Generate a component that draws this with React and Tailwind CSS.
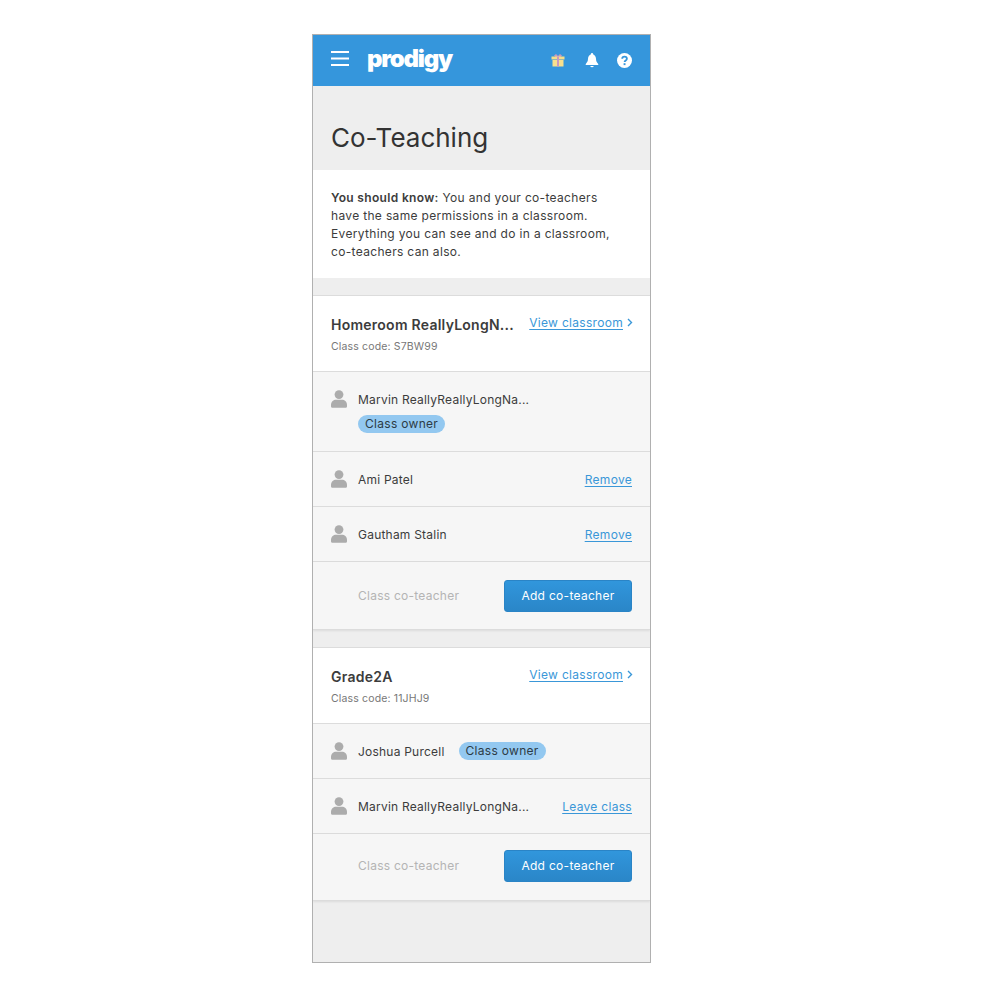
import React from "react";

function Person() {
  return (
    <svg width="16" height="18" viewBox="0 0 16 18" className="shrink-0 block">
      <circle cx="8" cy="4.6" r="4.4" fill="#acacac" />
      <path d="M0 15c0-3.4 2.600-5.200 5-5.200h6c2.400 0 5 1.800 5 5.200v1.200c0 .9-.8 1.600-1.600 1.600H1.600C.8 17.800 0 17.100 0 16.200z" fill="#acacac" />
    </svg>
  );
}

function Badge() {
  return (
    <span className="inline-flex h-[18px] items-center rounded-full bg-[#93c8f0] px-[7px] text-[12px] tracking-[0.3px] text-[#2d3b45]">
      Class owner
    </span>
  );
}

function Link({ children }) {
  return <a className="text-[12px] tracking-[0.3px] text-[#3a97d8] underline underline-offset-2 decoration-1">{children}</a>;
}

function CardHead({ title, code }) {
  return (
    <div className="flex h-[77px] items-start justify-between border-t border-b border-[#dcdcdc] bg-white pl-[18px] pr-[17px] pt-[19px]">
      <div>
        <div className="text-[14px] leading-[20px] font-semibold tracking-[0.25px] text-[#3c3c3c]">{title}</div>
        <div className="mt-[4px] text-[10.500px] leading-[16px] tracking-[0.15px] text-[#777777]">Class code: {code}</div>
      </div>
      <div className="-mt-[1px] flex items-center gap-[4px] leading-[18px]">
        <Link>View classroom</Link>
        <svg width="6" height="9" viewBox="0 0 6 9" fill="none" stroke="#3a97d8" strokeWidth="1.400" className="mb-[2px]">
          <path d="M1 1l3.500 3.500L1 8" />
        </svg>
      </div>
    </div>
  );
}

function Row({ name, action, badge }) {
  return (
    <div className="flex h-[55px] items-center border-b border-[#dcdcdc] bg-[#f6f6f6] px-[18px]">
      <Person />
      <span className="ml-[11px] mt-[1px] text-[12px] tracking-[0.22px] text-[#3c3c3c]">{name}</span>
      {badge && <span className="ml-[14px] flex"><Badge /></span>}
      {action && <span className="ml-auto mt-[1px] flex"><Link>{action}</Link></span>}
    </div>
  );
}

function AddRow({ second }) {
  return (
    <div className={second ? "flex h-[67px] items-start justify-between border-b border-[#dcdcdc] bg-[#f6f6f6] pl-[45px] pr-[18px] pt-[16px] shadow-[0_1px_2px_rgba(0,0,0,0.08)]" : "flex h-[68px] items-start justify-between border-b border-[#dcdcdc] bg-[#f6f6f6] pl-[45px] pr-[18px] pt-[18px] shadow-[0_1px_2px_rgba(0,0,0,0.08)]"}>
      <span className="mt-[7px] text-[12px] leading-[18px] tracking-[0.25px] text-[#b4b4b4]">Class co-teacher</span>
      <button className="h-[32px] w-[128px] rounded-[3px] border border-[#2a84c6] bg-gradient-to-b from-[#3196dc] to-[#2a86c8] text-[12px] tracking-[0.3px] text-white">
        Add co-teacher
      </button>
    </div>
  );
}

export default function App() {
  return (
    <div className="min-h-[1000px] bg-white pt-[34px] font-['Inter',sans-serif]">
      <div className="ml-[312px] flex h-[929px] w-[339px] flex-col overflow-hidden border border-[#b0b0b0] bg-[#eeeeee]">
        <header className="flex h-[51px] shrink-0 items-center bg-[#3596dc] pl-[18px] pr-[18px]">
          <svg width="18" height="15" viewBox="0 0 18 15" className="mb-[4px] block" fill="#ffffff">
            <rect x="0" y="0" width="18" height="2" />
            <rect x="0" y="6.500" width="18" height="2" />
            <rect x="0" y="13" width="18" height="2" />
          </svg>
          <span className="ml-[18px] mb-[3px] text-[24px] leading-[30px] font-black tracking-[-1.200px] text-white">prodigy</span>
          <div className="ml-auto flex items-center">
            <svg width="14" height="14" viewBox="0 0 14 14" className="mb-[1px] block">
              <path d="M3 2.500L5 1l2 2 2-2 2 1.500L9.500 4h-5z" fill="#c79ac0" />
              <rect x="0.500" y="3.500" width="13" height="3" fill="#f6dd8b" />
              <rect x="1.500" y="7" width="11" height="6.500" fill="#f8e08e" />
              <rect x="6" y="3.500" width="2" height="10" fill="#c79ac0" />
            </svg>
            <svg width="14" height="15" viewBox="0 0 14 15" className="ml-[20px] block" fill="#ffffff">
              <circle cx="7" cy="1.300" r="1.200" />
              <path d="M7 1.500c-2.700 0-4 2-4 4.300 0 2.500-1 3.700-2.200 5.200-.3.400-.1 1 .4 1h11.600c.5 0 .7-.6.400-1C11.900 9.500 11 8.300 11 5.800c0-2.300-1.300-4.300-4-4.300z" />
              <path d="M5.200 13a1.900 1.900 0 0 0 3.600 0z" />
            </svg>
            <svg width="15" height="15" viewBox="0 0 15 15" className="ml-[18px] block">
              <circle cx="7.500" cy="7.500" r="7.500" fill="#ffffff" />
              <path d="M5.200 5.800c0-1.300 1-2.100 2.300-2.100s2.400.8 2.400 2c0 1.700-2.300 1.700-2.300 3.300" fill="none" stroke="#3596dc" strokeWidth="1.800" />
              <rect x="6.600" y="10.200" width="1.900" height="1.900" fill="#3596dc" />
            </svg>
          </div>
        </header>

        <div className="flex h-[84px] shrink-0 items-end bg-[#eeeeee] px-[18px] pb-[14px]">
          <h1 className="text-[26px] leading-[36px] font-normal tracking-[0px] text-[#333333]">Co-Teaching</h1>
        </div>

        <div className="h-[108px] shrink-0 bg-white px-[18px] pt-[19px] text-[12px] leading-[18px] tracking-[0.33px] text-[#3c3c3c]">
          <p><span className="font-semibold">You should know:</span> You and your co-teachers<br />have the same permissions in a classroom.<br />Everything you can see and do in a classroom,<br />co-teachers can also.</p>
        </div>

        <div className="mt-[17px] shrink-0">
          <CardHead title="Homeroom ReallyLongN..." code="S7BW99" />
          <div className="flex h-[80px] items-start border-b border-[#dcdcdc] bg-[#f6f6f6] pl-[18px] pt-[18px]">
            <Person />
            <div className="ml-[11px] mt-[1px] flex flex-col items-start">
              <span className="text-[12px] leading-[18px] tracking-[0.22px] text-[#3c3c3c]">Marvin ReallyReallyLongNa...</span>
              <span className="mt-[6px] flex"><Badge /></span>
            </div>
          </div>
          <Row name="Ami Patel" action="Remove" />
          <Row name="Gautham Stalin" action="Remove" />
          <AddRow />
        </div>

        <div className="mt-[17px] shrink-0">
          <CardHead title="Grade2A" code="11JHJ9" />
          <Row name="Joshua Purcell" badge />
          <Row name="Marvin ReallyReallyLongNa..." action="Leave class" />
          <AddRow second />
        </div>
      </div>
    </div>
  );
}
